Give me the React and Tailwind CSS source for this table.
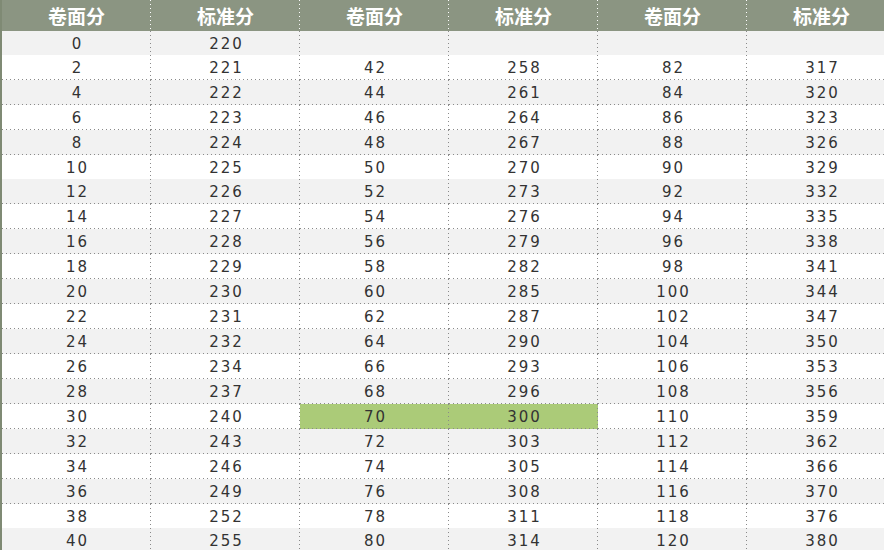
import React from "react";

const data = [
  ["0", "220", "", "", "", ""],
  ["2", "221", "42", "258", "82", "317"],
  ["4", "222", "44", "261", "84", "320"],
  ["6", "223", "46", "264", "86", "323"],
  ["8", "224", "48", "267", "88", "326"],
  ["10", "225", "50", "270", "90", "329"],
  ["12", "226", "52", "273", "92", "332"],
  ["14", "227", "54", "276", "94", "335"],
  ["16", "228", "56", "279", "96", "338"],
  ["18", "229", "58", "282", "98", "341"],
  ["20", "230", "60", "285", "100", "344"],
  ["22", "231", "62", "287", "102", "347"],
  ["24", "232", "64", "290", "104", "350"],
  ["26", "234", "66", "293", "106", "353"],
  ["28", "237", "68", "296", "108", "356"],
  ["30", "240", "70", "300", "110", "359"],
  ["32", "243", "72", "303", "112", "362"],
  ["34", "246", "74", "305", "114", "366"],
  ["36", "249", "76", "308", "116", "370"],
  ["38", "252", "78", "311", "118", "376"],
  ["40", "255", "80", "314", "120", "380"],
];

// row heights so the dotted lines land where the sheet has them
const rowH = ["h-[24px]", "h-[25px]", "h-[25px]", "h-[25px]", "h-[25px]", "h-[24px]", "h-[25px]", "h-[25px]", "h-[25px]", "h-[25px]", "h-[25px]", "h-[25px]", "h-[25px]", "h-[25px]", "h-[25px]", "h-[25px]", "h-[25px]", "h-[25px]", "h-[25px]", "h-[24px]", "h-[25px]"];

const headers = ["卷面分", "标准分", "卷面分", "标准分", "卷面分", "标准分"];

const Cell = ({ value, shade, hot }) => {
  const bg = hot ? "bg-[#abcb78]" : shade ? "bg-[#f2f2f2]" : "bg-white";
  return (
    <div className={`${bg} relative flex items-center justify-center pl-[2px] pt-[2px] text-[15px] tracking-[2px] text-[#333333] font-['DejaVu_Sans',sans-serif]`}>
      {value}
      <div className="absolute left-0 right-0 bottom-0 h-px bg-[linear-gradient(to_right,#8a8a8a_1px,transparent_1px)] bg-[length:4px_1px] bg-repeat-x" />
      <div className="absolute top-0 bottom-0 right-0 w-px bg-[linear-gradient(to_bottom,#8a8a8a_1px,transparent_1px)] bg-[length:1px_4px] bg-repeat-y" />
    </div>
  );
};

export default function App() {
  return (
    <div className="w-[884px] h-[550px] overflow-hidden bg-white border-l-2 border-[#7f8a74]">
      <div className="w-[894px]">
        <div className="grid grid-cols-[repeat(6,149px)] h-[31px] bg-[#8b9582]">
          {headers.map((h, i) => (
            <div
              key={i}
              className="relative flex items-center justify-center pt-[2px] text-[19px] font-bold text-white font-['Noto_Sans_CJK_SC',sans-serif]"
            >
              {h}
              <div className="absolute top-0 bottom-0 right-0 w-px bg-[linear-gradient(to_bottom,#ffffff_1px,transparent_1px)] bg-[length:1px_4px] bg-repeat-y" />
            </div>
          ))}
        </div>
        {data.map((row, r) => (
          <div key={r} className={`grid grid-cols-[repeat(6,149px)] ${rowH[r]}`}>
            {row.map((v, c) => (
              <Cell key={c} value={v} shade={r % 2 === 0} hot={r === 15 && (c === 2 || c === 3)} />
            ))}
          </div>
        ))}
      </div>
    </div>
  );
}
